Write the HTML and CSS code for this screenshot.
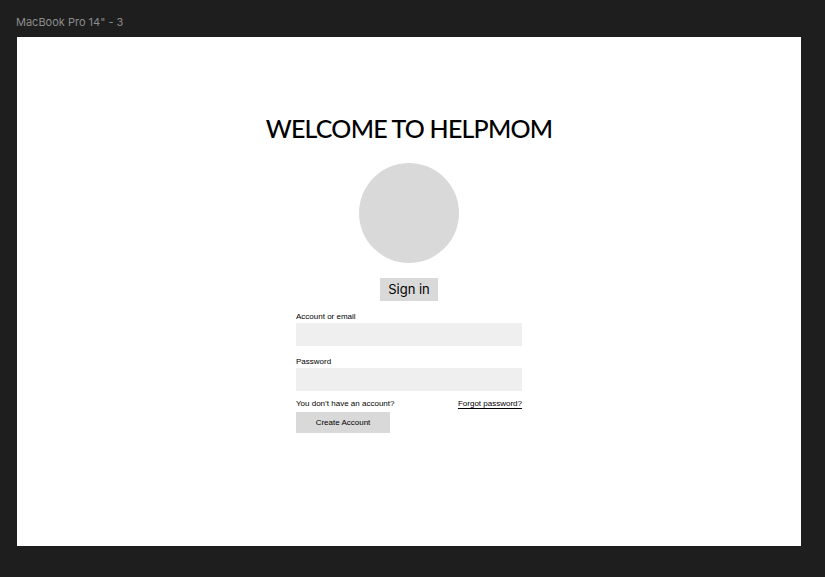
FILE: index.html
```html
<!DOCTYPE html>
<html>
<head>
<meta charset="utf-8">
<link rel="stylesheet" href="styles.css">
</head>
<body>
<div class="frame-label">MacBook Pro 14" - 3</div>
<div class="frame">
  <h1 class="title">WELCOME TO HELPMOM</h1>
  <div class="avatar"></div>
  <div class="signin">Sign in</div>
  <form class="form">
    <label class="label">Account or email</label>
    <div class="input"></div>
    <label class="label label-2">Password</label>
    <div class="input"></div>
    <div class="row">
      <span class="muted">You don’t have an account?</span>
      <a class="forgot">Forgot password?</a>
    </div>
    <div class="create">Create Account</div>
  </form>
</div>
</body>
</html>
```
FILE: styles.css
```css
html, body { margin: 0; padding: 0; }
body {
  background: #1e1e1e;
  width: 825px;
  height: 577px;
  overflow: hidden;
  font-family: "Liberation Sans", Arial, sans-serif;
}
.frame-label {
  color: #8c8c8c;
  font-size: 11px;
  line-height: 14px;
  padding: 15px 0 0 16px;
  height: 22px;
  font-family: "Inter", "Liberation Sans", sans-serif;
}
.frame {
  margin-left: 17px;
  width: 784px;
  height: 509px;
  background: #fff;
  display: flex;
  flex-direction: column;
  align-items: center;
}
.title {
  margin: 76px 0 0 0;
  font-family: "Lato", "Liberation Sans", sans-serif;
  font-weight: 500;
  font-size: 25px;
  line-height: 30px;
  color: #000;
  letter-spacing: -0.8px;
}
.avatar {
  margin-top: 20px;
  width: 100px;
  height: 100px;
  border-radius: 50%;
  background: #d9d9d9;
}
.signin {
  margin-top: 15px;
  width: 58px;
  height: 23px;
  background: #d9d9d9;
  font-size: 13px;
  line-height: 23px;
  text-align: center;
  color: #000;
  font-family: "Inter", "Liberation Sans", sans-serif;
}
.form {
  margin: 11px 0 0 0;
  width: 226px;
  display: flex;
  flex-direction: column;
}
.label {
  font-size: 8px;
  line-height: 10px;
  color: #000;
}
.label-2 { margin-top: 11px; }
.input {
  margin-top: 1px;
  height: 23px;
  background: #efefef;
}
.row {
  margin-top: 8px;
  display: flex;
  justify-content: space-between;
  font-size: 8px;
  line-height: 10px;
  color: #000;
}
.forgot {
  text-decoration: underline;
  text-underline-offset: 2px;
}
.create {
  margin-top: 3px;
  width: 94px;
  height: 21px;
  background: #d9d9d9;
  font-size: 8px;
  line-height: 21px;
  text-align: center;
  color: #000;
}
```
